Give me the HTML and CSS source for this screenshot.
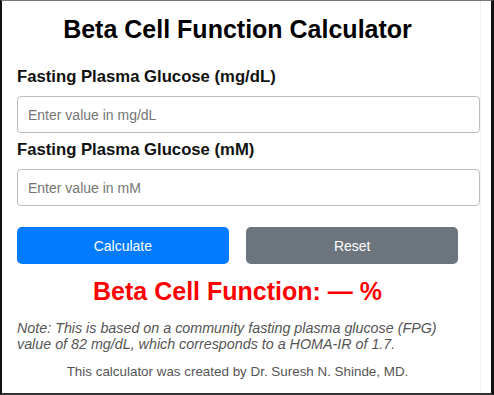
FILE: index.html
```html
<!DOCTYPE html>
<html lang="en">
<head>
  <meta charset="UTF-8">
  <meta name="viewport" content="width=device-width, initial-scale=1.0">
  <title>Beta Cell Function Calculator</title>
  <link rel="stylesheet" href="styles.css">
</head>
<body>
  <div class="frame">
    <div class="calculator">
      <h1>Beta Cell Function Calculator</h1>

      <!-- Inputs -->
      <label for="fpgMg">Fasting Plasma Glucose (mg/dL)</label>
      <input type="number" id="fpgMg" placeholder="Enter value in mg/dL">

      <label for="fpgMm">Fasting Plasma Glucose (mM)</label>
      <input type="number" id="fpgMm" placeholder="Enter value in mM">

      <!-- Buttons -->
      <div class="buttons">
        <button class="btn btn-calc" id="calcBtn">Calculate</button>
        <button class="btn btn-reset" id="resetBtn">Reset</button>
      </div>

      <h2 class="result" id="result">Beta Cell Function: — %</h2>

      <p class="note">Note: This is based on a community fasting plasma glucose (FPG) value of 82 mg/dL, which corresponds to a HOMA-IR of 1.7.</p>
      <p class="credit">This calculator was created by Dr. Suresh N. Shinde, MD.</p>
    </div>
  </div>
</body>
</html>
```

FILE: styles.css
```css
/* Basic styles */
* {
    box-sizing: border-box;
}
body {
    margin: 0;
    font-family: "Liberation Sans", Arial, sans-serif;
    background: #fff;
}

.frame {
    width: 494px;
    height: 395px;
    border-top: 1px solid #777;
    border-left: 2px solid #111;
    border-right: 3px solid #111;
    border-bottom: 2px solid #333;
    overflow: hidden;
}

.calculator {
    width: 479px;
    height: 100%;
    padding: 14px 22px 0 15px;
    border-right: 1px solid #f0f0f4;
}

h1 {
    margin: 0 0 23px;
    font-size: 25px;
    text-align: center;
    color: #000;
}

/* Inputs */
label {
    display: block;
    margin-bottom: 9px;
    font-size: 16.7px;
    font-weight: bold;
    color: #111;
}
input {
    display: block;
    box-sizing: content-box;
    width: 100%;
    height: 35px;
    padding: 0 10px;
    margin: 0 0 7px;
    border: 1px solid #bdbdbd;
    border-radius: 4px;
    font-family: inherit;
    font-size: 14px;
    color: #333;
}
input::placeholder {
    color: #757575;
}
input::-webkit-outer-spin-button,
input::-webkit-inner-spin-button {
    -webkit-appearance: none;
    margin: 0;
}

/* Buttons */
.buttons {
    display: flex;
    justify-content: space-between;
    margin-top: 21px;
}
.btn {
    width: 48%;
    height: 37px;
    border: none;
    border-radius: 5px;
    color: #fff;
    font-family: inherit;
    font-size: 14px;
    cursor: pointer;
}
.btn-calc {
    background: #007bff;
}
.btn-reset {
    background: #6c757d;
}

.result {
    margin: 13px 0 0;
    font-size: 25px;
    text-align: center;
    color: #ff0000;
}

.note {
    margin: 14px 0 0;
    font-size: 14.3px;
    font-style: italic;
    color: #555;
}
.credit {
    margin: 12px 0 0;
    font-size: 13.4px;
    text-align: center;
    color: #555;
}
```
